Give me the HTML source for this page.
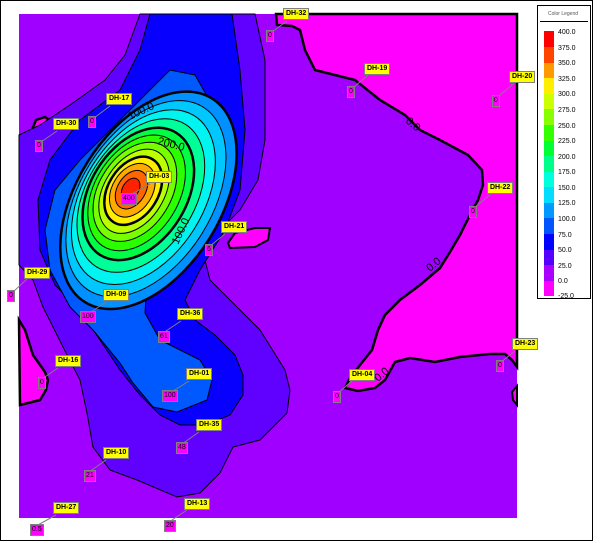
<!DOCTYPE html>
<html><head><style>
html,body{margin:0;padding:0;background:#fff;}
body{width:604px;height:543px;position:relative;overflow:hidden;font-family:"Liberation Sans",Arial,sans-serif;}
.y{position:absolute;background:#ffff00;border:1px solid #808080;font:bold 7px "Liberation Sans",sans-serif;color:#000;height:10px;line-height:10px;padding:0 2px;white-space:nowrap}
.v{position:absolute;background:#ff00ff;border:1px solid #808080;font:7px "Liberation Sans",sans-serif;color:#000;height:10px;line-height:10px;padding:0 1px;white-space:nowrap}
</style></head><body>
<svg width="604" height="543" style="position:absolute;left:0;top:0">
<rect x="0.5" y="0.5" width="592" height="540" fill="none" stroke="#000"/>
<rect x="19" y="14" width="498" height="504" fill="#a000ff"/>
<path d="M276,14 L277,25 L292,26 L300,30 L305,50 L315,70 L335,75 L355,80 L380,100 L405,115 L420,130 L440,140 L468,155 L482,170 L483,185 L478,200 L470,215 L460,235 L450,252 L440,268 L420,285 L400,300 L385,315 L378,330 L372,350 L360,365 L350,378 L345,388 L358,391 L375,388 L385,380 L395,362 L410,358 L435,362 L460,357 L490,354 L505,354 L512,360 L517,367 L517,14 Z" fill="#ff00ff" stroke="#000" stroke-width="2.5"/>
<path d="M517,386 L512,392 L513,400 L517,405 Z" fill="#ff00ff" stroke="#000" stroke-width="2"/>
<path d="M19,320 L25,330 L33,355 L45,372 L48,380 L46,390 L40,400 L20,405 Z" fill="#ff00ff" stroke="#000" stroke-width="2.5"/>
<path d="M36,120 L45,117 L52,122 L52,134 L46,140 L37,138 L32,130 Z" fill="#ff00ff" stroke="#000" stroke-width="2.5"/>
<path d="M228,243 L235,233 L255,228 L270,228 L268,240 L255,247 L230,248 Z" fill="#ff00ff" stroke="#000" stroke-width="2"/>
<path d="M88,103 L100,101 L98,104 Z" fill="#ff00ff"/>
<path d="M140,14 L125,55 L105,80 L70,105 L40,125 L19,135 L19,265 L33,280 L43,307 L63,347 L80,380 L87,413 L93,447 L110,470 L137,480 L177,497 L200,493 L220,473 L233,447 L260,440 L287,413 L290,390 L285,370 L260,330 L235,305 L210,280 L205,260 L215,235 L240,210 L258,180 L265,140 L265,60 L255,14 Z" fill="#6000ff" stroke="#000" stroke-width="1"/>
<path d="M150,14 L140,50 L120,90 L80,120 L50,160 L38,200 L40,250 L55,285 L80,310 L100,340 L120,370 L140,395 L160,415 L180,425 L205,425 L230,415 L243,395 L243,375 L235,355 L215,335 L195,320 L185,300 L200,270 L225,230 L240,190 L245,130 L240,70 L232,14 Z" fill="#0800ff" stroke="#000" stroke-width="1"/>
<path d="M147,280 L145,313 L160,340 L200,360 L212,380 L207,400 L177,412 L153,407 L133,383 L120,363 L93,330 L70,307 L50,270 L45,230 L55,190 L80,160 L110,130 L140,100 L170,70 L195,75 L215,110 L225,160 L215,215 L190,255 L165,278 Z" fill="#0058ff" stroke="#000" stroke-width="1"/>
<g stroke="#000" transform="rotate(-58 140 195)">
<ellipse cx="140" cy="205" rx="120" ry="72" fill="#0090ff" stroke-width="2.5"/>
<ellipse cx="140" cy="202" rx="108" ry="66" fill="#00c8ff" stroke-width="1"/>
<ellipse cx="140" cy="199" rx="96" ry="60" fill="#00f5f0" stroke-width="1"/>
<ellipse cx="140" cy="196" rx="84" ry="54" fill="#00ff99" stroke-width="1"/>
<ellipse cx="140" cy="193" rx="72" ry="48" fill="#00ff44" stroke-width="2.5"/>
<ellipse cx="140" cy="191" rx="63" ry="42" fill="#2aff00" stroke-width="1"/>
<ellipse cx="140" cy="189" rx="54" ry="36" fill="#77ff00" stroke-width="1"/>
<ellipse cx="140" cy="188" rx="46" ry="30" fill="#bbff00" stroke-width="1"/>
<ellipse cx="140" cy="187" rx="37" ry="25" fill="#ffee00" stroke-width="2.5"/>
<ellipse cx="140" cy="186" rx="29" ry="20" fill="#ffaa00" stroke-width="1"/>
<ellipse cx="140" cy="185" rx="21" ry="14" fill="#ff6600" stroke-width="1"/>
<ellipse cx="140" cy="184" rx="12" ry="8" fill="#ff2200" stroke-width="1"/>
</g>
<g font-family="Liberation Sans" font-size="11" fill="#000">
<text x="130" y="120" transform="rotate(-25 130 120)">100.0</text>
<text x="157" y="144" transform="rotate(15 157 144)">200.0</text>
<text x="178" y="245" transform="rotate(-65 178 245)">100.0</text>
<text x="405" y="122" transform="rotate(40 405 122)">0.0</text>
<text x="430" y="272" transform="rotate(-40 430 272)">0.0</text>
<text x="378" y="382" transform="rotate(-40 378 382)">0.0</text>
</g>
<rect x="537.5" y="5.5" width="53" height="293" fill="#fff" stroke="#000"/>
<line x1="540" y1="21.5" x2="588" y2="21.5" stroke="#000"/>
<text x="563" y="15" font-size="5" text-anchor="middle" fill="#555" font-family="Liberation Sans">Color Legend</text>
<g>
<rect x="544" y="31" width="10" height="16" fill="#ff0000"/>
<rect x="544" y="47" width="10" height="16" fill="#ff4400"/>
<rect x="544" y="63" width="10" height="16" fill="#ff9900"/>
<rect x="544" y="78" width="10" height="16" fill="#ffee00"/>
<rect x="544" y="94" width="10" height="16" fill="#ccff00"/>
<rect x="544" y="109" width="10" height="16" fill="#88ff00"/>
<rect x="544" y="125" width="10" height="16" fill="#33ff00"/>
<rect x="544" y="141" width="10" height="16" fill="#00ff33"/>
<rect x="544" y="156" width="10" height="16" fill="#00ff88"/>
<rect x="544" y="172" width="10" height="16" fill="#00ffdd"/>
<rect x="544" y="187" width="10" height="16" fill="#00ddff"/>
<rect x="544" y="203" width="10" height="16" fill="#0099ff"/>
<rect x="544" y="218" width="10" height="16" fill="#0055ff"/>
<rect x="544" y="234" width="10" height="16" fill="#0000ff"/>
<rect x="544" y="250" width="10" height="16" fill="#5500ff"/>
<rect x="544" y="265" width="10" height="16" fill="#aa00ff"/>
<rect x="544" y="281" width="10" height="15" fill="#ff00ff"/>
</g>
<g font-family="Liberation Sans" font-size="7" fill="#000">
<text x="558" y="34">400.0</text><text x="558" y="50">375.0</text><text x="558" y="65">350.0</text>
<text x="558" y="81">325.0</text><text x="558" y="96">300.0</text><text x="558" y="112">275.0</text>
<text x="558" y="128">250.0</text><text x="558" y="143">225.0</text><text x="558" y="159">200.0</text>
<text x="558" y="174">175.0</text><text x="558" y="190">150.0</text><text x="558" y="205">125.0</text>
<text x="558" y="221">100.0</text><text x="558" y="237">75.0</text><text x="558" y="252">50.0</text>
<text x="558" y="268">25.0</text><text x="558" y="283">0.0</text><text x="558" y="298">-25.0</text>
</g>
<g stroke="#808080" stroke-width="1" fill="none">
<line x1="287" y1="21" x2="272" y2="32"/><line x1="368" y1="75" x2="353" y2="88"/><line x1="513" y1="84" x2="498" y2="97"/>
<line x1="110" y1="106" x2="94" y2="118"/><line x1="57" y1="131" x2="41" y2="142"/><line x1="150" y1="184" x2="130" y2="195"/>
<line x1="491" y1="194" x2="475" y2="207"/><line x1="225" y1="234" x2="210" y2="246"/><line x1="27" y1="279" x2="13" y2="292"/>
<line x1="106" y1="302" x2="88" y2="314"/><line x1="181" y1="321" x2="163" y2="333"/><line x1="58" y1="368" x2="42" y2="379"/>
<line x1="352" y1="381" x2="338" y2="393"/><line x1="515" y1="351" x2="500" y2="363"/><line x1="189" y1="381" x2="170" y2="393"/>
<line x1="199" y1="432" x2="182" y2="444"/><line x1="106" y1="460" x2="89" y2="472"/><line x1="56" y1="515" x2="36" y2="526"/>
<line x1="187" y1="510" x2="169" y2="522"/>
</g>
</svg>
<div class="y" style="left:283px;top:8px">DH-32</div><div class="v" style="left:266px;top:30px">0</div>
<div class="y" style="left:364px;top:63px">DH-19</div><div class="v" style="left:347px;top:86px">0</div>
<div class="y" style="left:509px;top:71px">DH-20</div><div class="v" style="left:492px;top:95px">0</div>
<div class="y" style="left:106px;top:93px">DH-17</div><div class="v" style="left:88px;top:116px">0</div>
<div class="y" style="left:53px;top:118px">DH-30</div><div class="v" style="left:35px;top:140px">0</div>
<div class="y" style="left:146px;top:171px">DH-03</div><div class="v" style="left:121px;top:193px">400</div>
<div class="y" style="left:487px;top:182px">DH-22</div><div class="v" style="left:469px;top:206px">0</div>
<div class="y" style="left:221px;top:221px">DH-21</div><div class="v" style="left:205px;top:244px">6</div>
<div class="y" style="left:24px;top:267px">DH-29</div><div class="v" style="left:7px;top:290px">0</div>
<div class="y" style="left:103px;top:289px">DH-09</div><div class="v" style="left:80px;top:311px">100</div>
<div class="y" style="left:177px;top:308px">DH-36</div><div class="v" style="left:158px;top:331px">61</div>
<div class="y" style="left:55px;top:355px">DH-16</div><div class="v" style="left:38px;top:377px">0</div>
<div class="y" style="left:349px;top:369px">DH-04</div><div class="v" style="left:333px;top:391px">0</div>
<div class="y" style="left:512px;top:338px">DH-23</div><div class="v" style="left:496px;top:360px">0</div>
<div class="y" style="left:186px;top:368px">DH-01</div><div class="v" style="left:162px;top:390px">100</div>
<div class="y" style="left:196px;top:419px">DH-35</div><div class="v" style="left:176px;top:442px">48</div>
<div class="y" style="left:103px;top:447px">DH-10</div><div class="v" style="left:84px;top:470px">21</div>
<div class="y" style="left:53px;top:502px">DH-27</div><div class="v" style="left:30px;top:524px">0.5</div>
<div class="y" style="left:184px;top:498px">DH-13</div><div class="v" style="left:164px;top:520px">20</div>
</body></html>
